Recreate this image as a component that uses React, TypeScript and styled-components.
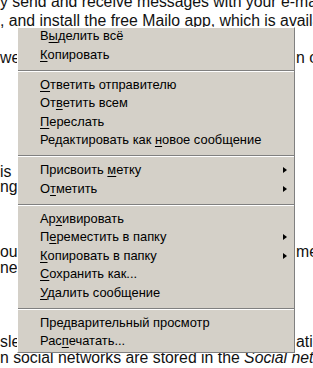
import React from 'react'
import styled, { createGlobalStyle } from 'styled-components'

const GlobalStyle = createGlobalStyle`
    html, body {
        margin: 0;
        padding: 0;
        background: #fff;
    }
    body {
        width: 313px;
        height: 368px;
        overflow: hidden;
    }
`

type Entry = { label: string; sub?: boolean } | 'sep'

// "&" marks the accelerator letter
const entries: Entry[] = [
    { label: 'В&ыделить всё' },
    { label: '&Копировать' },
    'sep',
    { label: '&Ответить отправителю' },
    { label: 'От&ветить всем' },
    { label: '&Переслать' },
    { label: 'Редактировать как &новое сообщение' },
    'sep',
    { label: 'Присвоить &метку', sub: true },
    { label: 'О&тметить', sub: true },
    'sep',
    { label: 'Ар&хивировать' },
    { label: 'П&ереместить в папку', sub: true },
    { label: '&Копировать в папку', sub: true },
    { label: '&Сохранить как...' },
    { label: '&Удалить сообщение' },
    'sep',
    { label: 'Пре&дварительный просмотр' },
    { label: 'Рас&печатать...' },
]

// page text behind the menu: only the parts that show on either side of it
type TextLine = { gap: number; left?: string; right?: string; italic?: string }

const lines: TextLine[] = [
    { gap: -6, left: 'y send and receive messages with your e-mail address' },
    { gap: 3, left: ', and install the free Mailo app, which is available' },
    { gap: 21, left: 'we', right: 'n other devices' },
    { gap: 97.5, left: 'is' },
    { gap: -1, left: 'ng,' },
    { gap: 49, left: 'our', right: 'messages' },
    { gap: 0.5, left: 'ne' },
    { gap: 58, left: 'sle', right: 'ation' },
    { gap: -0.5, left: 'n social networks are stored in the ', italic: 'Social networks' },
]

const Label = ({ text }: { text: string }) => {
    const i = text.indexOf('&')
    if (i < 0) return <>{text}</>
    return (
        <>
            {text.slice(0, i)}
            <Key>{text[i + 1]}</Key>
            {text.slice(i + 2)}
        </>
    )
}

const App = () => {
    return (
        <Page>
            <GlobalStyle />
            {lines.map((l, index) => (
                <Line key={index} $gap={l.gap} $split={!l.italic && !!l.left && l.left.length < 5}>
                    <span>
                        {l.left}
                        {l.italic && <em>{l.italic}</em>}
                    </span>
                    {l.right && <span>{l.right}</span>}
                </Line>
            ))}
            <Menu>
                {entries.map((e, index) =>
                    e === 'sep' ? (
                        <Separator key={index}>
                            <Rule />
                        </Separator>
                    ) : (
                        <Item key={index}>
                            <span>
                                <Label text={e.label} />
                            </span>
                            {e.sub && <Arrow />}
                        </Item>
                    ),
                )}
            </Menu>
        </Page>
    )
}

export default App

const Page = styled.div`
    position: relative;
    width: 313px;
    height: 368px;
    overflow: hidden;
    font-family: 'Liberation Sans', Arial, sans-serif;
    font-size: 15.8px;
    color: #111;
`

const Line = styled.div<{ $gap: number; $split: boolean }>`
    display: grid;
    grid-template-columns: ${({ $split }) => ($split ? '296px 1fr' : '1fr')};
    margin-top: ${({ $gap }) => $gap}px;
    height: 16px;
    line-height: 16px;
    white-space: nowrap;
    span {
        overflow: hidden;
    }
`

const Menu = styled.div`
    position: absolute;
    left: 17px;
    top: 27px;
    width: 278px;
    box-sizing: border-box;
    background: #d4d0c8;
    border-top: 1px solid #fff;
    border-left: 1px solid #fff;
    border-right: 1px solid #808080;
    border-bottom: 1px solid #808080;
    font-family: 'Liberation Sans', Arial, sans-serif;
    font-size: 12.9px;
    color: #000;
`

const Item = styled.div`
    display: flex;
    align-items: flex-start;
    height: 18.5px;
    line-height: 15px;
    padding: 0 7px 0 22px;
    white-space: nowrap;
`

const Key = styled.span`
    text-decoration: underline;
    text-underline-offset: 2px;
`

const Arrow = styled.span`
    margin: 5px 0 0 auto;
    width: 0;
    height: 0;
    border-left: 4px solid #000;
    border-top: 3.5px solid transparent;
    border-bottom: 3.5px solid transparent;
`

const Separator = styled.div`
    display: flex;
    align-items: center;
    height: 11.5px;
`

const Rule = styled.div`
    width: 100%;
    border-top: 1px solid #808080;
    border-bottom: 1px solid #fff;
`
